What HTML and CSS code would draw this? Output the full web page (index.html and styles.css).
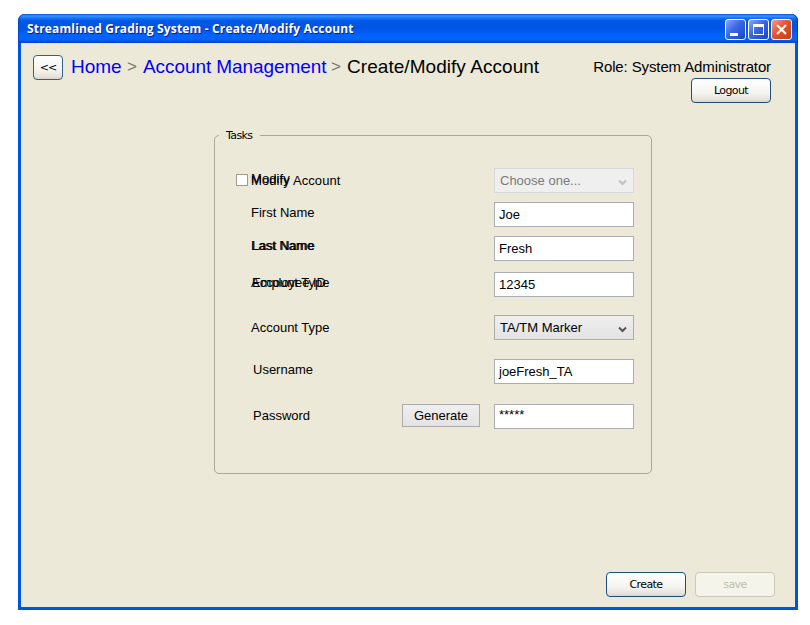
FILE: index.html
```html
<!DOCTYPE html>
<html lang="en">
<head>
<meta charset="utf-8">
<title>Streamlined Grading System</title>
<link rel="stylesheet" href="styles.css">
</head>
<body>
<div class="window">
  <div class="titlebar">
    <span class="title">Streamlined Grading System - Create/Modify Account</span>
    <div class="controls">
      <svg class="ctl" viewBox="0 0 19 19"><path d="M4 13h8v3H4z" fill="#fff"/></svg>
      <svg class="ctl" viewBox="0 0 19 19"><path d="M4 4h11v11H4zM5 7v7h9V7z" fill="#fff" fill-rule="evenodd"/></svg>
      <svg class="ctl close" viewBox="0 0 19 19"><path d="M5 5l9 9M14 5l-9 9" stroke="#fff" stroke-width="2.200"/></svg>
    </div>
  </div>
  <div class="header">
    <button class="btn back">&lt;&lt;</button>
    <nav class="crumbs"><a class="home">Home</a><span class="sep">&gt;</span><a class="acct">Account Management</a><span class="sep">&gt;</span><span class="here">Create/Modify Account</span></nav>
    <div class="session">
      <div class="role">Role: System Administrator</div>
      <button class="btn logout">Logout</button>
    </div>
  </div>
  <section class="tasks">
    <h2 class="legend">Tasks</h2>
    <div class="row r1"><i class="check"></i><span class="label modify">Modify Account<span class="over up">Modify</span></span><div class="field select disabled"><span>Choose one...</span><svg class="chev" viewBox="0 0 9 7"><path d="M1 1.500l3.500 3.500L8 1.500" /></svg></div></div>
    <div class="row r2"><span class="label">First Name</span><div class="field">Joe</div></div>
    <div class="row r3"><span class="label">Last Name<span class="over shift">Last Name</span></span><div class="field">Fresh</div></div>
    <div class="row r4"><span class="label">Account Type<span class="over employee">Employee ID</span></span><div class="field">12345</div></div>
    <div class="row r5"><span class="label">Account Type</span><div class="field select"><span>TA/TM Marker</span><svg class="chev" viewBox="0 0 9 7"><path d="M1 1.500l3.500 3.500L8 1.500" /></svg></div></div>
    <div class="row r6"><span class="label user">Username</span><div class="field">joeFresh_TA</div></div>
    <div class="row r7"><span class="label pass">Password</span><button class="generate">Generate</button><div class="field stars">*****</div></div>
  </section>
  <div class="footer">
    <button class="btn create">Create</button>
    <button class="btn save" disabled>save</button>
  </div>
</div>
</body>
</html>
```
FILE: styles.css
```css
* { box-sizing: border-box; }
body { margin: 0; padding: 14px 0 0 18px; background: #fff; font-family: "Liberation Sans", Arial, sans-serif; color: #000; }
.window { width: 780px; height: 596px; display: flex; flex-direction: column; background: #ece9d8; border: 3px solid #0054e3; border-top: 0; border-radius: 7px 7px 0 0; }
.titlebar { flex: none; height: 29px; margin: 0 -3px; padding: 0 6px 0 9px; display: flex; align-items: center; justify-content: space-between; border-radius: 7px 7px 0 0; background: linear-gradient(#0058e0 0, #3a93ff 2px, #1673f5 4px, #0058e6 7px, #0054e3 14px, #0061fb 20px, #0066ff 25px, #0055e5 27px, #003dcc 29px); box-shadow: inset 1px 0 #0048d0, inset -1px 0 #0038b5; }
.title { font: bold 12px/16px "Open Sans", sans-serif; letter-spacing: 0.16px; color: #fff; text-shadow: 1px 1px #0a1d8c; white-space: nowrap; }
.controls { display: flex; gap: 2px; padding-top: 2px; }
.ctl { width: 21px; height: 21px; border: 1px solid #fff; border-radius: 3px; background: linear-gradient(135deg, #8aa8f4, #3b67e2 45%, #1743cc); }
.close { background: linear-gradient(135deg, #f0a08a, #e3552f 45%, #c93a10); }
.header { display: flex; height: 92px; padding: 12px 24px 0 12px; }
.btn { padding: 0; border: 1px solid #1d5080; border-radius: 4px; background: linear-gradient(#fff, #f5f4ef 60%, #e6e3da 90%, #d9d3ce); font: 11px/13px "DejaVu Sans", sans-serif; letter-spacing: -0.6px; color: #000; }
.back { width: 30px; height: 25px; border-color: #32608c; letter-spacing: -1px; }
.crumbs { display: flex; height: 25px; margin-left: 8px; font-size: 19px; line-height: 23px; white-space: nowrap; color: #00f; }
.home { width: 56px; }
.acct { width: 188px; letter-spacing: -0.08px; }
.sep { width: 16px; font-size: 17px; color: #77756c; }
.here { color: #000; letter-spacing: 0.05px; }
.session { margin-left: auto; display: flex; flex-direction: column; align-items: flex-end; }
.role { height: 23px; font-size: 15px; line-height: 23px; letter-spacing: -0.12px; white-space: nowrap; }
.logout { width: 80px; height: 25px; }
.tasks { position: relative; width: 438px; height: 339px; margin-left: 193px; padding: 32px 17px 0 21px; border: 1px solid #aca899; border-radius: 5px; }
.legend { position: absolute; left: 4px; top: -8px; margin: 0; padding: 0 8px 0 7px; background: #ece9d8; font: 11px/15px "DejaVu Sans", sans-serif; letter-spacing: -0.6px; }
.row { display: flex; height: 25px; font-size: 13px; line-height: 15px; white-space: nowrap; }
.r2, .r3 { margin-top: 9px; }
.r4 { margin-top: 11px; }
.r5 { margin-top: 18px; }
.r6 { margin-top: 19px; }
.r7 { margin-top: 20px; }
.check { flex: none; width: 12px; height: 12px; margin-top: 6px; border: 1px solid #a29a8c; background: #fff; }
.label { position: relative; align-self: flex-start; margin: 3px 0 0 15px; }
.modify { margin: 5px 0 0 3px; letter-spacing: 0.1px; }
.r3 .label { margin-top: 2px; }
.r5 .label { margin-top: 5px; }
.label.user { margin: 3px 0 0 17px; }
.label.pass { margin: 4px 0 0 17px; }
.over { position: absolute; left: 0; top: 0; }
.up { top: -2px; }
.shift { left: 1px; }
.employee { left: 1px; letter-spacing: -0.05px; }
.field { flex: none; width: 140px; height: 25px; margin-left: auto; padding: 4px 6px 0 4px; border: 1px solid #abadb3; background: #fff; }
.select { display: flex; justify-content: space-between; padding: 4px 6px 0 5px; background: linear-gradient(#efefef, #e3e3e3); border-color: #acacac; }
.disabled { color: #7a7a7a; background: #efefef; border-color: #d8d8d8; }
.chev { width: 9px; height: 7px; margin-top: 6px; fill: none; stroke: #555; stroke-width: 2; }
.disabled .chev { stroke: #bfbfbf; }
.generate { width: 78px; height: 23px; margin-left: auto; padding: 0; border: 1px solid #acacac; background: linear-gradient(#efefef, #e3e3e3); font: 13px/15px "Liberation Sans", Arial, sans-serif; color: #000; }
.stars { margin-left: 14px; padding-top: 2px; }
.footer { display: flex; gap: 9px; margin: auto 20px 10px auto; }
.create, .save { width: 80px; height: 25px; }
.save { border-color: #c9c7ba; background: #f5f4ea; color: #c0beae; }
```
